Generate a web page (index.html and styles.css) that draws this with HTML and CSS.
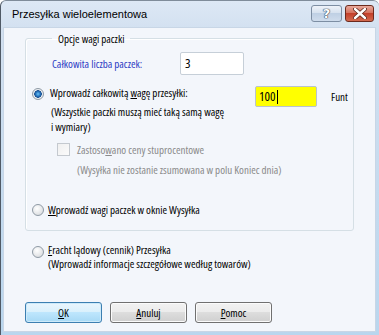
FILE: index.html
```html
<!DOCTYPE html>
<html lang="pl">

<head>
    <meta charset="UTF-8">
    <title>Przesyłka wieloelementowa</title>
    <link rel="stylesheet" href="styles.css">
</head>

<body>
    <div class="window">
        <!-- Title bar -->
        <div class="titlebar">
            <span class="title">Przesyłka wieloelementowa</span>
            <div class="caption-buttons">
                <div class="cap-btn help">?</div>
                <div class="cap-btn close">
                    <svg width="14" height="11" viewBox="0 0 14 11">
                        <path d="M2 1 L12 10 M12 1 L2 10" stroke="#5a2418" stroke-width="4" stroke-linecap="round"/>
                        <path d="M2 1 L12 10 M12 1 L2 10" stroke="#ffffff" stroke-width="2.4" stroke-linecap="round"/>
                    </svg>
                </div>
            </div>
        </div>

        <div class="client">
            <!-- Weight options group -->
            <fieldset class="group">
                <legend>Opcje wagi paczki</legend>

                <div class="row count-row">
                    <span class="blue-label">Całkowita liczba paczek:</span>
                    <div class="textbox count">3</div>
                </div>

                <div class="row total-row">
                    <span class="radio checked"></span>
                    <span class="radio-text">Wprowadź całkowitą <u>w</u>agę przesyłki:</span>
                    <div class="textbox weight">100<span class="caret"></span></div>
                    <span class="unit">Funt</span>
                </div>
                <div class="note">(Wszystkie paczki muszą mieć taką samą wagę<br>i wymiary)</div>

                <div class="row check-row">
                    <span class="checkbox"></span>
                    <span class="gray">Zastoso<u>w</u>ano ceny stuprocentowe</span>
                </div>
                <div class="gray gray-note">(Wysyłka nie zostanie zsumowana w polu Koniec dnia)</div>

                <div class="row per-row">
                    <span class="radio"></span>
                    <span class="radio-text"><u>W</u>prowadź wagi paczek w oknie Wysyłka</span>
                </div>
            </fieldset>

            <div class="freight">
                <span class="radio"></span>
                <span class="freight-text"><u>F</u>racht lądowy (cennik) Przesyłka<br>(Wprowadź informacje szczegółowe według towarów)</span>
            </div>

            <!-- Buttons -->
            <div class="buttons">
                <div class="button default"><u>O</u>K</div>
                <div class="button"><u>A</u>nuluj</div>
                <div class="button"><u>P</u>omoc</div>
            </div>
        </div>
    </div>
</body>

</html>
```

FILE: styles.css
```css
/* General Reset */
body {
    margin: 0;
    padding: 0;
    font-family: "Open Sans", "Noto Sans", sans-serif;
    font-size: 11px;
    font-stretch: 75%;
    line-height: 15px;
    color: #000;
}

u {
    text-decoration: underline;
    text-underline-offset: 1px;
}

/* Window frame */
.window {
    width: 379px;
    height: 335px;
    box-sizing: border-box;
    display: flex;
    flex-direction: column;
    background: linear-gradient(to bottom, #dde8f5, #d2e0f0 30px, #b9d6ee);
    border-left: 1px solid #505a66;
    border-top: 1px solid #7f8c9a;
    border-radius: 6px 6px 0 0;
}

.titlebar {
    height: 26px;
    flex: none;
    display: flex;
    align-items: center;
    justify-content: space-between;
    padding-left: 11px;
    padding-right: 5px;
}

.title {
    font-family: "Liberation Sans", Arial, sans-serif;
    font-size: 11px;
    font-stretch: normal;
    color: #000;
}

.caption-buttons {
    display: flex;
    gap: 3px;
    align-self: flex-start;
    margin-top: 4px;
}

.cap-btn {
    height: 17px;
    border-radius: 3px;
    display: flex;
    align-items: center;
    justify-content: center;
    box-sizing: border-box;
}

.help {
    width: 31px;
    border: 1px solid #7d8ea3;
    background: linear-gradient(to bottom, #eef3f9, #d7e2ef 45%, #bfd0e4 50%, #cfdcec);
    color: #fff;
    font-family: "DejaVu Sans", sans-serif;
    font-stretch: normal;
    font-weight: bold;
    font-size: 13px;
    text-shadow: 0 0 1px #2d3c52, 0 0 1px #2d3c52, 0 0 1px #2d3c52;
}

.close {
    width: 29px;
    border: 1px solid #6c2a1d;
    background: linear-gradient(to bottom, #e8a99c, #d5735f 45%, #c4402a 50%, #d26a4f);
}

/* Client area */
.client {
    flex: 1;
    margin: 0 3px 3px 2px;
    background: #f3f6fb;
    border: 1px solid #c8d6e6;
    display: flex;
    flex-direction: column;
}

.group {
    margin: 3px 21px 0 21px;
    padding: 0 0 13px 0;
    border: 1px solid #d5dfe5;
    border-radius: 3px;
    box-shadow: inset 1px 1px 0 #fff;
}

.group legend {
    margin-left: 26px;
    padding: 0 6px;
}

.row {
    display: flex;
    align-items: center;
}

.count-row {
    padding-left: 26px;
    margin-top: 6px;
    height: 23px;
}

.blue-label {
    color: #2b3bc4;
    width: 128px;
}

.textbox {
    height: 23px;
    box-sizing: border-box;
    border: 1px solid #c6cfd8;
    border-radius: 2px;
    background: #fff;
    font-size: 13px;
    padding-left: 4px;
    display: flex;
    align-items: center;
}

.count {
    width: 64px;
}

.total-row {
    margin-top: 11px;
    padding-left: 6px;
    height: 21px;
    align-items: flex-start;
}

.total-row .radio {
    margin-top: 2px;
}

.radio-text {
    margin-left: 6px;
    width: 205px;
    margin-top: -1px;
}

.weight {
    width: 62px;
    height: 21px;
    background: #ffff00;
    border-color: #b9c3cd;
    padding-left: 3px;
}

.caret {
    width: 1px;
    height: 14px;
    background: #000;
    margin-left: 1px;
}

.unit {
    margin-left: 14px;
    align-self: center;
}

.note {
    padding-left: 25px;
    margin-top: -3px;
}

.check-row {
    padding-left: 31px;
    margin-top: 8px;
    height: 15px;
}

.checkbox {
    width: 13px;
    height: 13px;
    box-sizing: border-box;
    border: 1px solid #c4c9cf;
    background: linear-gradient(135deg, #f0f0f0, #fbfbfb);
    margin-right: 7px;
}

.gray {
    color: #8a8a8a;
}

.gray-note {
    padding-left: 51px;
    margin-top: 5px;
}

.per-row {
    margin-top: 25px;
    padding-left: 6px;
}

.per-row .radio-text {
    margin-left: 4px;
    margin-top: 0;
    width: auto;
}

/* Radio buttons */
.radio {
    width: 12px;
    height: 12px;
    flex: none;
    box-sizing: border-box;
    border-radius: 50%;
    border: 1px solid #8f9aa5;
    background: radial-gradient(circle at 40% 35%, #ffffff, #e4e6e8 60%, #cfd3d7);
}

.radio.checked {
    background: radial-gradient(circle, #6fc4f4 0, #2d7fc8 2px, #164d8f 3.5px, #eef1f4 4px, #dde1e5);
}

/* Freight option */
.freight {
    display: flex;
    align-items: flex-start;
    margin: 12px 0 0 28px;
}

.freight .radio {
    margin-top: 3px;
}

.freight-text {
    margin-left: 4px;
    line-height: 14px;
}

/* Buttons */
.buttons {
    display: flex;
    gap: 8px;
    margin: 31px 0 0 21px;
}

.button {
    width: 77px;
    height: 21px;
    box-sizing: border-box;
    border: 1px solid #707070;
    border-radius: 3px;
    background: linear-gradient(to bottom, #f2f2f2, #ebebeb 49%, #dddddd 50%, #cfcfcf);
    display: flex;
    align-items: center;
    justify-content: center;
    box-shadow: inset 0 0 0 1px #fbfbfb;
}

.button.default {
    border-color: #3c7fb1;
    background: linear-gradient(to bottom, #eaf6fd, #d9f0fc 49%, #bee6fd 50%, #a7d9f5);
    box-shadow: inset 0 0 0 1px #cdeafa;
}
```
